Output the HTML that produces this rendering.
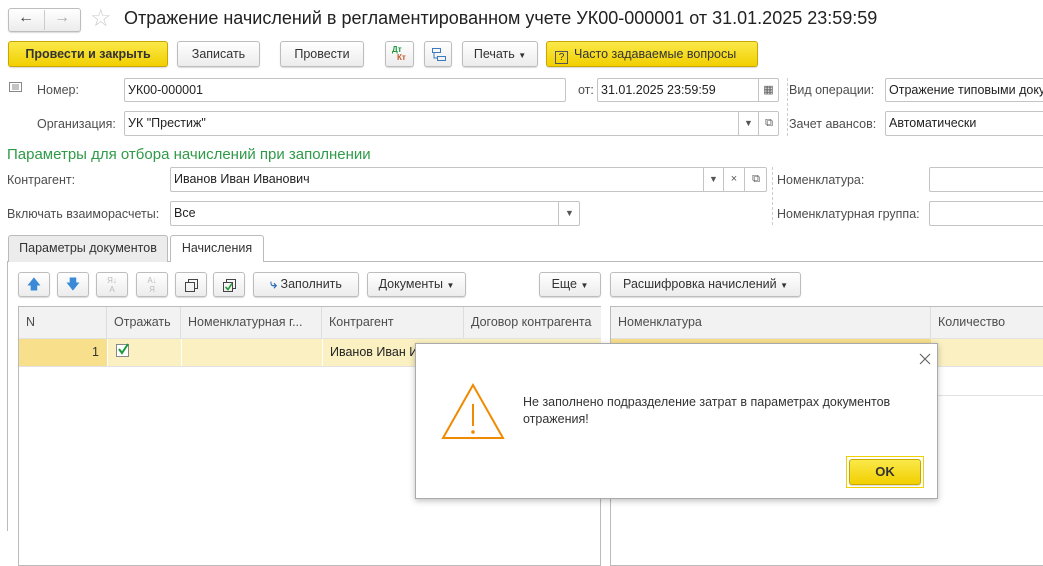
<!DOCTYPE html>
<html><head><meta charset="utf-8"><style>
*{box-sizing:border-box;margin:0;padding:0}
body{width:1043px;height:527px;overflow:hidden;background:#fff;font-family:"Liberation Sans",sans-serif;font-size:12px;color:#333;position:relative}
.a{position:absolute}
.btn{position:absolute;border:1px solid #bdbdbd;border-radius:3px;background:linear-gradient(#fff,#ececec);box-shadow:0 1px 1px rgba(0,0,0,.15);text-align:center;color:#333;font-size:12.5px}
.y{background:linear-gradient(#fbe94a,#f1cf00);border-color:#c8a800;font-weight:bold;color:#333}
.inp{position:absolute;border:1px solid #c4c4c4;border-radius:2px;background:#fff;padding-left:3px;font-size:12.5px;color:#222}
.lbl{position:absolute;color:#4d4d4d;font-size:12.5px}
.seg{position:absolute;top:0;bottom:0;border-left:1px solid #c4c4c4;text-align:center;color:#555;font-size:9px}
.th{position:absolute;top:0;height:31px;border-right:1px solid #ddd;padding:8px 0 0 7px;color:#4d4d4d;font-size:12.5px;background:#f2f2f2;white-space:nowrap;overflow:hidden}
.dash{position:absolute;border-left:1px dashed #ccc;width:0}
</style></head><body>

<div class="btn" style="left:8px;top:8px;width:73px;height:24px"></div>
<div class="a" style="left:44px;top:10px;width:1px;height:20px;background:#ccc"></div>
<div class="a" style="left:18px;top:9px;font-size:16px;color:#444">&#8592;</div>
<div class="a" style="left:54px;top:9px;font-size:16px;color:#aaa">&#8594;</div>
<div class="a" style="left:90px;top:4px;font-size:24px;color:#ccc">&#9734;</div>
<div class="a" style="left:124px;top:8px;font-size:18px;color:#222;white-space:nowrap">Отражение начислений в регламентированном учете УК00-000001 от 31.01.2025 23:59:59</div>

<div class="btn y" style="left:8px;top:41px;width:160px;height:26px;line-height:24px">Провести и закрыть</div>
<div class="btn" style="left:177px;top:41px;width:83px;height:26px;line-height:24px">Записать</div>
<div class="btn" style="left:280px;top:41px;width:84px;height:26px;line-height:24px">Провести</div>
<div class="btn" style="left:385px;top:41px;width:29px;height:26px"><span class="a" style="left:6px;top:3px;font-size:8px;color:#1a9a3a;font-weight:bold">Дт</span><span class="a" style="left:11px;top:11px;font-size:8px;color:#c0582a;font-weight:bold">Кт</span></div>
<div class="btn" style="left:424px;top:41px;width:28px;height:26px"><svg class="a" style="left:6px;top:5px" width="16" height="15" viewBox="0 0 16 15" fill="none" stroke="#3a7abf"><rect x="1.5" y="1.5" width="8" height="4"/><rect x="6.5" y="9.5" width="8" height="4"/><path d="M3 6v5h3"/></svg></div>
<div class="btn" style="left:462px;top:41px;width:76px;height:26px;line-height:24px">Печать <span style="font-size:8px">&#9660;</span></div>
<div class="btn y" style="left:546px;top:41px;width:212px;height:26px;line-height:24px;font-weight:normal;text-align:left;padding-left:8px"><span style="display:inline-block;width:13px;height:13px;border:1px solid #555;font-size:10px;line-height:11px;text-align:center;margin-right:6px;vertical-align:-2px">?</span>Часто задаваемые вопросы</div>

<svg class="a" style="left:9px;top:82px" width="13" height="10" viewBox="0 0 13 10" fill="none" stroke="#888"><rect x=".5" y=".5" width="12" height="9"/><path d="M3 3h7M3 5h7M3 7h7"/></svg>
<div class="lbl" style="left:37px;top:83px">Номер:</div>
<div class="inp" style="left:124px;top:78px;width:442px;height:24px;line-height:22px">УК00-000001</div>
<div class="lbl" style="left:578px;top:83px">от:</div>
<div class="inp" style="left:597px;top:78px;width:182px;height:24px;line-height:22px">31.01.2025 23:59:59<div class="seg" style="left:160px;width:20px;font-size:11px;line-height:22px">&#9638;</div></div>
<div class="dash" style="left:787px;top:78px;height:58px"></div>
<div class="lbl" style="left:789px;top:83px">Вид операции:</div>
<div class="inp" style="left:885px;top:78px;width:170px;height:24px;line-height:22px;white-space:nowrap;overflow:hidden">Отражение типовыми документами</div>

<div class="lbl" style="left:37px;top:117px">Организация:</div>
<div class="inp" style="left:124px;top:111px;width:655px;height:25px;line-height:23px">УК "Престиж"<div class="seg" style="left:613px;width:20px;line-height:23px">&#9660;</div><div class="seg" style="left:633px;width:21px;line-height:23px;font-size:11px">&#10697;</div></div>
<div class="lbl" style="left:789px;top:117px">Зачет авансов:</div>
<div class="inp" style="left:885px;top:111px;width:170px;height:25px;line-height:23px">Автоматически</div>

<div class="a" style="left:7px;top:146px;font-size:15px;color:#2f9a48">Параметры для отбора начислений при заполнении</div>

<div class="lbl" style="left:7px;top:173px">Контрагент:</div>
<div class="inp" style="left:170px;top:167px;width:597px;height:25px;line-height:23px">Иванов Иван Иванович<div class="seg" style="left:532px;width:20px;line-height:23px">&#9660;</div><div class="seg" style="left:552px;width:21px;line-height:23px;font-size:11px">×</div><div class="seg" style="left:573px;width:23px;line-height:23px;font-size:11px">&#10697;</div></div>
<div class="dash" style="left:772px;top:167px;height:58px"></div>
<div class="lbl" style="left:777px;top:173px">Номенклатура:</div>
<div class="inp" style="left:929px;top:167px;width:130px;height:25px"></div>

<div class="lbl" style="left:7px;top:207px">Включать взаиморасчеты:</div>
<div class="inp" style="left:170px;top:201px;width:410px;height:25px;line-height:23px">Все<div class="seg" style="left:387px;width:22px;line-height:23px">&#9660;</div></div>
<div class="lbl" style="left:777px;top:207px">Номенклатурная группа:</div>
<div class="inp" style="left:929px;top:201px;width:130px;height:25px"></div>

<div class="a" style="left:7px;top:261px;width:1040px;height:1px;background:#bbb"></div>
<div class="a" style="left:7px;top:261px;width:1px;height:270px;background:#bbb"></div>
<div class="a" style="left:8px;top:235px;width:160px;height:27px;background:#ececec;border:1px solid #bbb;border-bottom:none;border-radius:3px 3px 0 0;text-align:center;line-height:25px;font-size:12.5px">Параметры документов</div>
<div class="a" style="left:170px;top:235px;width:94px;height:27px;background:#fff;border:1px solid #bbb;border-bottom:none;border-radius:3px 3px 0 0;text-align:center;line-height:25px;font-size:12.5px">Начисления</div>

<div class="btn" style="left:18px;top:272px;width:32px;height:25px;color:#3a8ad8;font-size:14px;line-height:22px">&#129093;</div>
<div class="btn" style="left:57px;top:272px;width:32px;height:25px;color:#3a8ad8;font-size:14px;line-height:22px">&#129095;</div>
<div class="btn" style="left:96px;top:272px;width:32px;height:25px;color:#bbb;font-size:8px;line-height:9px;padding-top:3px">Я↓<br>А</div>
<div class="btn" style="left:136px;top:272px;width:32px;height:25px;color:#bbb;font-size:8px;line-height:9px;padding-top:3px">А↓<br>Я</div>
<div class="btn" style="left:175px;top:272px;width:32px;height:25px"><svg class="a" style="left:8px;top:5px" width="15" height="15" fill="none" stroke="#444"><rect x="1.5" y="4.5" width="9" height="9"/><path d="M4.5 4.5v-3h9v9h-3"/></svg></div>
<div class="btn" style="left:213px;top:272px;width:32px;height:25px"><svg class="a" style="left:8px;top:5px" width="15" height="15" fill="none" stroke="#444"><rect x="1.5" y="4.5" width="9" height="9"/><path d="M4.5 4.5v-3h9v9h-3"/><path d="M3.5 9l2.5 2.5 4-6" stroke="#2a9a3a" stroke-width="1.6"/></svg></div>
<div class="btn" style="left:253px;top:272px;width:106px;height:25px;line-height:23px"><span style="color:#2a6ab8;font-weight:bold">&#10551;</span> Заполнить</div>
<div class="btn" style="left:367px;top:272px;width:99px;height:25px;line-height:23px">Документы <span style="font-size:8px">&#9660;</span></div>
<div class="btn" style="left:539px;top:272px;width:62px;height:25px;line-height:23px">Еще <span style="font-size:8px">&#9660;</span></div>
<div class="btn" style="left:610px;top:272px;width:191px;height:25px;line-height:23px">Расшифровка начислений <span style="font-size:8px">&#9660;</span></div>

<div class="a" style="left:18px;top:306px;width:583px;height:260px;border:1px solid #bbb">
  <div class="th" style="left:0;width:88px">N</div>
  <div class="th" style="left:88px;width:74px">Отражать</div>
  <div class="th" style="left:162px;width:141px">Номенклатурная г...</div>
  <div class="th" style="left:303px;width:142px">Контрагент</div>
  <div class="th" style="left:445px;width:137px;border-right:none">Договор контрагента</div>
  <div class="a" style="left:0;top:31px;width:582px;height:29px;background:#fbf0c2;border-top:1px solid #e2e2e2;border-bottom:1px solid #e2e2e2"></div>
  <div class="a" style="left:0;top:32px;width:88px;height:27px;background:#f7df8c;text-align:right;padding-right:8px;line-height:27px;font-size:12.5px">1</div>
  <div class="a" style="left:88px;top:32px;width:1px;height:27px;background:#fff"></div>
  <div class="a" style="left:162px;top:32px;width:1px;height:27px;background:#fff"></div>
  <div class="a" style="left:303px;top:32px;width:1px;height:27px;background:#fff"></div>
  <div class="a" style="left:97px;top:37px;width:13px;height:13px;border:1px solid #888;background:#fff"><svg class="a" style="left:0;top:-2px" width="13" height="13"><path d="M2 6l3 4 6-9" stroke="#1a9a3a" stroke-width="2" fill="none"/></svg></div>
  <div class="a" style="left:311px;top:38px;font-size:12.5px;color:#222">Иванов Иван И</div>
</div>
<div class="a" style="left:610px;top:306px;width:440px;height:260px;border:1px solid #bbb">
  <div class="th" style="left:0;width:320px">Номенклатура</div>
  <div class="th" style="left:320px;width:120px">Количество</div>
  <div class="a" style="left:0;top:31px;width:440px;height:29px;background:#fbf0c2;border-top:1px solid #e2e2e2;border-bottom:1px solid #e2e2e2"></div>
  <div class="a" style="left:0;top:32px;width:320px;height:27px;background:#f7df8c"></div>
  <div class="a" style="left:0;top:88px;width:440px;height:1px;background:#e2e2e2"></div>
</div>

<div class="a" style="left:415px;top:343px;width:523px;height:156px;background:#fff;border:1px solid #aaa;box-shadow:0 2px 6px rgba(0,0,0,.25)">
  <svg class="a" style="left:503px;top:9px" width="12" height="12"><path d="M1 1l10 10M11 1L1 11" stroke="#666" stroke-width="1.2"/></svg>
  <svg class="a" style="left:25px;top:38px" width="64" height="60" viewBox="0 0 64 60"><path d="M32 3L2 56h60z" fill="none" stroke="#f08a00" stroke-width="2"/><path d="M32 22v22" stroke="#f08a00" stroke-width="2"/><circle cx="32" cy="50" r="1.8" fill="#f08a00"/></svg>
  <div class="a" style="left:107px;top:50px;font-size:12.5px;line-height:17px;color:#333">Не заполнено подразделение затрат в параметрах документов<br>отражения!</div>
  <div class="a" style="left:430px;top:112px;width:78px;height:32px;border:1px solid #f0d000"></div>
  <div class="btn y" style="left:433px;top:115px;width:72px;height:26px;line-height:24px;font-size:13px">OK</div>
</div>
</body></html>
